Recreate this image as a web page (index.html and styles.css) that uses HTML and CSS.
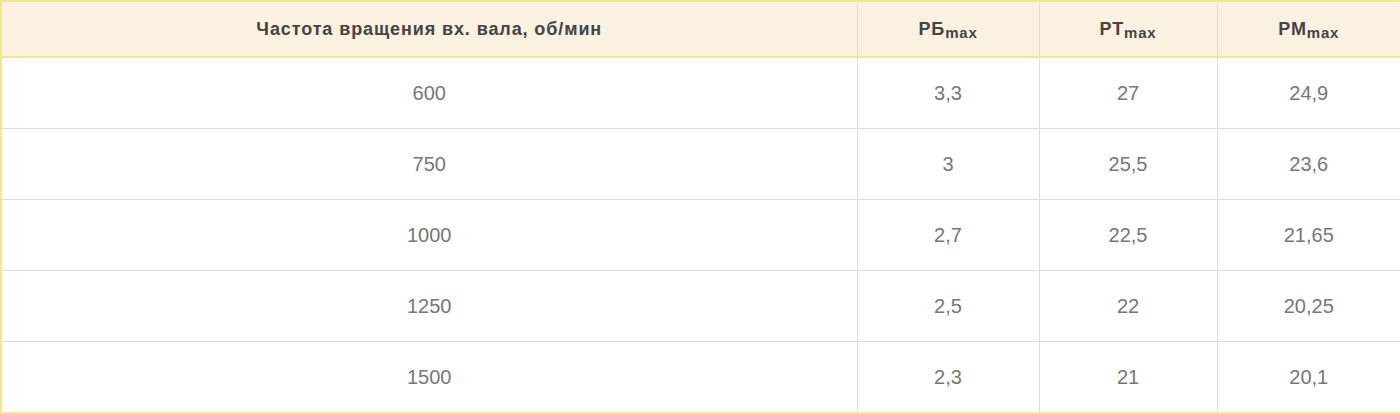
FILE: index.html
```html
<!DOCTYPE html>
<html lang="ru">
<head>
<meta charset="utf-8">
<link rel="stylesheet" href="styles.css">
</head>
<body>
<table class="specs">
  <colgroup>
    <col class="c1"><col class="c2"><col class="c3"><col class="c4">
  </colgroup>
  <thead>
    <tr>
      <th>Частота вращения вх. вала, об/мин</th>
      <th>РБ<sub>max</sub></th>
      <th>РТ<sub>max</sub></th>
      <th>РМ<sub>max</sub></th>
    </tr>
  </thead>
  <tbody>
    <tr><td>600</td><td>3,3</td><td>27</td><td>24,9</td></tr>
    <tr><td>750</td><td>3</td><td>25,5</td><td>23,6</td></tr>
    <tr><td>1000</td><td>2,7</td><td>22,5</td><td>21,65</td></tr>
    <tr><td>1250</td><td>2,5</td><td>22</td><td>20,25</td></tr>
    <tr><td>1500</td><td>2,3</td><td>21</td><td>20,1</td></tr>
  </tbody>
</table>
</body>
</html>
```
FILE: styles.css
```css
html, body {
  margin: 0;
  padding: 0;
  background: #ffffff;
}
body {
  font-family: "Liberation Sans", Arial, sans-serif;
}
.specs {
  width: 1400px;
  border-collapse: collapse;
  table-layout: fixed;
  border: 2px solid #f1e78c;
}
.c1 { width: 856px; }
.c2 { width: 182px; }
.c3 { width: 178px; }
.c4 { width: 184px; }
.specs th {
  background: #faf1e1;
  color: #444444;
  font-weight: bold;
  font-size: 18px;
  letter-spacing: 0.9px;
  height: 54px;
  padding: 0;
  border: 1px solid #f1e78c;
  border-bottom: 2px solid #f1e78c;
  text-align: center;
  vertical-align: middle;
}
.specs th sub {
  font-size: 15px;
  letter-spacing: 0.8px;
  vertical-align: -3px;
  line-height: 0;
}
.specs td {
  color: #777777;
  font-size: 20px;
  height: 70px;
  padding: 0;
  border: 1px solid #dcdcdc;
  text-align: center;
  vertical-align: middle;
}
```
